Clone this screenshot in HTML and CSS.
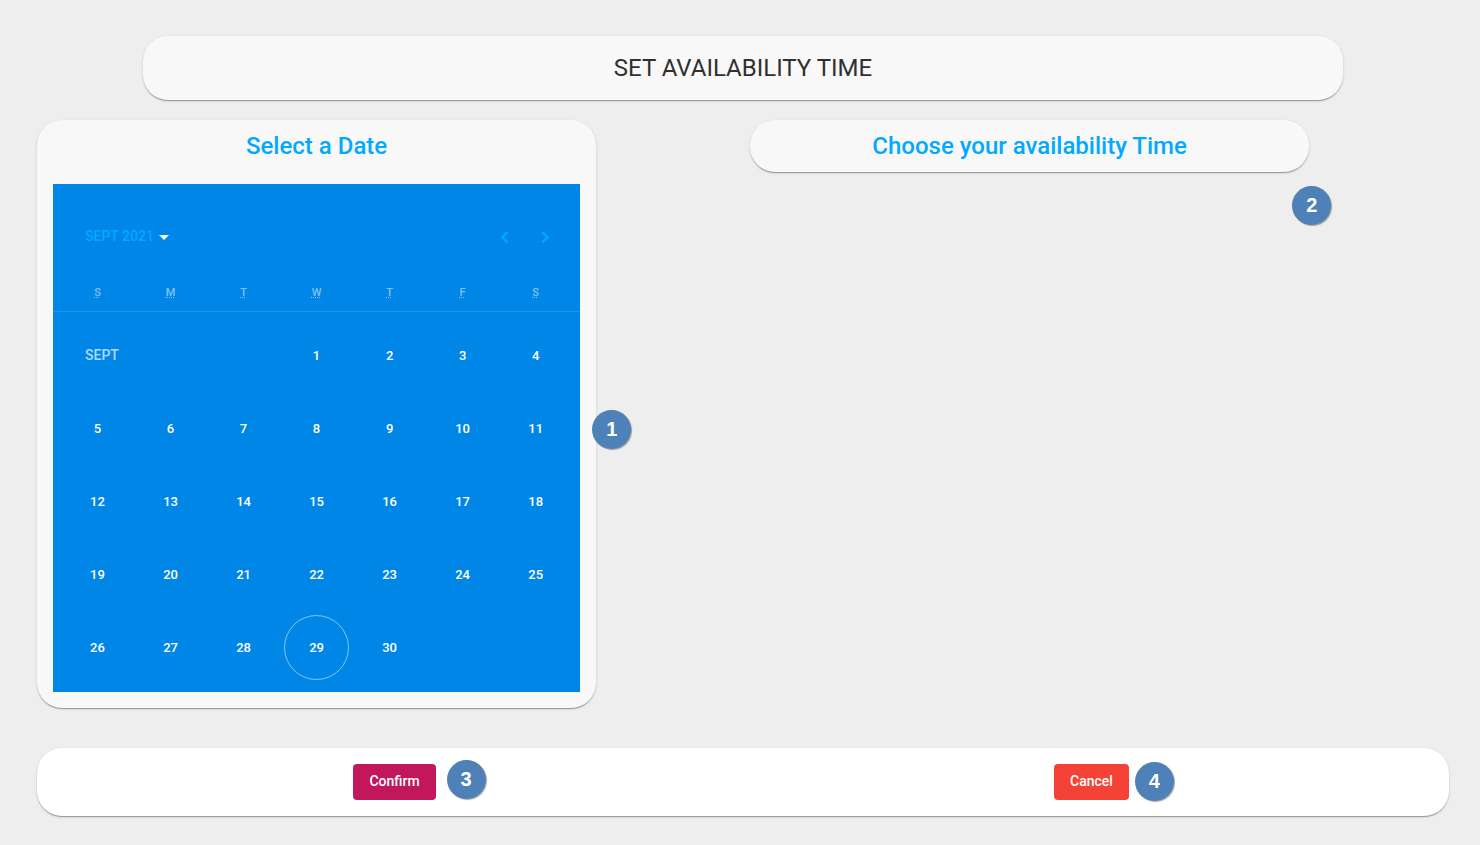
FILE: index.html
```html
<!DOCTYPE html>
<html lang="en">
<head>
<meta charset="utf-8">
<meta name="viewport" content="width=device-width, initial-scale=1">
<title>Set availability time</title>
<link rel="stylesheet" href="styles.css">
</head>
<body>
<main class="page">
  <header class="card title-card">
    <h1 class="title">SET AVAILABILITY TIME</h1>
  </header>

  <div class="columns">
    <section class="card date-card">
      <h2 class="heading">Select a Date</h2>
      <div class="calendar">
        <div class="calendar-header">
          <button type="button" class="period"><span class="period-label">SEPT 2021</span><span class="caret"></span></button>
          <div class="nav">
            <button type="button" class="nav-button" aria-label="Previous month">
              <svg width="24" height="24" viewBox="0 0 24 24"><path d="M14.500 6.900 9.200 12.200l5.300 5.300" fill="none" stroke="currentColor" stroke-width="2.200"/></svg>
            </button>
            <button type="button" class="nav-button" aria-label="Next month">
              <svg width="24" height="24" viewBox="0 0 24 24"><path d="M9.200 6.900l5.300 5.300-5.300 5.300" fill="none" stroke="currentColor" stroke-width="2.200"/></svg>
            </button>
          </div>
        </div>
        <table class="days">
          <thead>
            <tr>
              <th scope="col"><abbr title="Sunday">S</abbr></th>
              <th scope="col"><abbr title="Monday">M</abbr></th>
              <th scope="col"><abbr title="Tuesday">T</abbr></th>
              <th scope="col"><abbr title="Wednesday">W</abbr></th>
              <th scope="col"><abbr title="Thursday">T</abbr></th>
              <th scope="col"><abbr title="Friday">F</abbr></th>
              <th scope="col"><abbr title="Saturday">S</abbr></th>
            </tr>
            <tr><td class="divider" colspan="7"></td></tr>
          </thead>
          <tbody>
            <tr>
              <td class="month" colspan="3">SEPT</td>
              <td><button type="button" class="day">1</button></td>
              <td><button type="button" class="day">2</button></td>
              <td><button type="button" class="day">3</button></td>
              <td><button type="button" class="day">4</button></td>
            </tr>
            <tr>
              <td><button type="button" class="day">5</button></td>
              <td><button type="button" class="day">6</button></td>
              <td><button type="button" class="day">7</button></td>
              <td><button type="button" class="day">8</button></td>
              <td><button type="button" class="day">9</button></td>
              <td><button type="button" class="day">10</button></td>
              <td><button type="button" class="day">11</button></td>
            </tr>
            <tr>
              <td><button type="button" class="day">12</button></td>
              <td><button type="button" class="day">13</button></td>
              <td><button type="button" class="day">14</button></td>
              <td><button type="button" class="day">15</button></td>
              <td><button type="button" class="day">16</button></td>
              <td><button type="button" class="day">17</button></td>
              <td><button type="button" class="day">18</button></td>
            </tr>
            <tr>
              <td><button type="button" class="day">19</button></td>
              <td><button type="button" class="day">20</button></td>
              <td><button type="button" class="day">21</button></td>
              <td><button type="button" class="day">22</button></td>
              <td><button type="button" class="day">23</button></td>
              <td><button type="button" class="day">24</button></td>
              <td><button type="button" class="day">25</button></td>
            </tr>
            <tr>
              <td><button type="button" class="day">26</button></td>
              <td><button type="button" class="day">27</button></td>
              <td><button type="button" class="day">28</button></td>
              <td><button type="button" class="day today" aria-current="date">29</button></td>
              <td><button type="button" class="day">30</button></td>
              <td></td>
              <td></td>
            </tr>
          </tbody>
        </table>
      </div>
      <span class="badge badge-date">1</span>
    </section>

    <section class="card time-card">
      <h2 class="heading">Choose your availability Time</h2>
      <span class="badge badge-time">2</span>
    </section>
  </div>

  <footer class="card actions">
    <div class="action">
      <button type="button" class="button confirm">Confirm</button>
      <span class="badge badge-confirm">3</span>
    </div>
    <div class="action">
      <button type="button" class="button cancel">Cancel</button>
      <span class="badge badge-cancel">4</span>
    </div>
  </footer>
</main>
</body>
</html>
```

FILE: styles.css
```css
* {
  box-sizing: border-box;
}

body {
  margin: 0;
  background: #eee;
  color: #303030;
  font-family: Roboto, "Liberation Sans", sans-serif;
}

button {
  margin: 0;
  border: 0;
  background: none;
  font: inherit;
  color: inherit;
  cursor: pointer;
}

.page {
  padding: 36px 31px 28px 37px;
}

.card {
  position: relative;
  border-radius: 25px;
  background: #f8f8f8;
  box-shadow: 0 2px 1px -1px rgba(0, 0, 0, 0.2), 0 1px 1px 0 rgba(0, 0, 0, 0.14), 0 1px 3px 0 rgba(0, 0, 0, 0.12);
}

.title-card {
  width: 85%;
  margin: 0 auto 20px;
  padding: 16px;
}

.title {
  margin: 0;
  font-size: 24px;
  font-weight: 400;
  line-height: 32px;
  text-align: center;
}

.columns {
  display: grid;
  grid-template-columns: 1fr 1fr;
  column-gap: 14px;
  align-items: start;
  margin-bottom: 40px;
}

.date-card,
.time-card {
  width: 80%;
}

.date-card {
  padding: 0 16px 16px;
}

.heading {
  margin: 0;
  padding: 10px 0;
  color: #03a9ff;
  font-size: 24px;
  font-weight: 500;
  line-height: 32px;
  text-align: center;
}

.calendar {
  margin-top: 12px;
  padding: 33px 8px 8px;
  background: #0086e7;
  color: #fff;
}

.calendar-header {
  display: flex;
  justify-content: space-between;
  padding: 0 7px 0 8px;
  color: #03a9ff;
}

.period {
  display: flex;
  align-items: center;
  gap: 5px;
  height: 40px;
  padding: 0 16px;
  font-size: 14px;
  font-weight: 500;
}

.period-label {
  padding-bottom: 2px;
}

.caret {
  border: 5px solid transparent;
  border-top-color: #fff;
  border-bottom: 0;
}

.nav {
  display: flex;
}

.nav-button {
  display: flex;
  align-items: center;
  justify-content: center;
  width: 40px;
  height: 40px;
  padding: 0;
}

.days {
  width: 100%;
  table-layout: fixed;
  border-spacing: 0;
}

.days th {
  padding: 28px 0 10px;
  color: rgba(255, 255, 255, 0.5);
  font-size: 11px;
  font-weight: 500;
  line-height: 16px;
}

.days td {
  padding: 4px;
}

.days .divider {
  position: relative;
  height: 8px;
  padding: 0;
}

.divider::after {
  content: "";
  position: absolute;
  top: 0;
  right: -8px;
  left: -8px;
  height: 1px;
  background: rgba(255, 255, 255, 0.12);
}

.days .month {
  padding: 0 0 2px 24px;
  color: rgba(255, 255, 255, 0.7);
  font-size: 14px;
  font-weight: 500;
}

.day {
  display: block;
  width: 100%;
  aspect-ratio: 1;
  padding: 0;
  border: 1px solid transparent;
  border-radius: 50%;
  font-size: 13px;
  font-weight: 500;
}

.today {
  border-color: rgba(255, 255, 255, 0.5);
}

.actions {
  display: grid;
  grid-template-columns: 1fr 1fr;
  column-gap: 14px;
  padding: 16px;
  background: #fff;
}

.action {
  position: relative;
  justify-self: center;
}

.button {
  display: block;
  height: 36px;
  padding: 0 16px 2px;
  border-radius: 4px;
  color: #fff;
  font-size: 14px;
  font-weight: 500;
}

.confirm {
  background: #c2185b;
}

.cancel {
  background: #f44336;
}

.badge {
  position: absolute;
  width: 39px;
  height: 39px;
  border-radius: 50%;
  background: #4f81b9;
  box-shadow: 1px 1px 1px rgba(0, 0, 0, 0.35);
  color: #fff;
  font-family: "Liberation Sans", Arial, sans-serif;
  font-size: 20px;
  font-weight: 700;
  line-height: 38px;
  text-align: center;
}

.badge-date {
  top: 290px;
  right: -35px;
}

.badge-time {
  top: 66px;
  right: -22px;
}

.badge-confirm {
  top: -4px;
  left: calc(100% + 11px);
}

.badge-cancel {
  top: -2px;
  left: calc(100% + 6px);
}
```
